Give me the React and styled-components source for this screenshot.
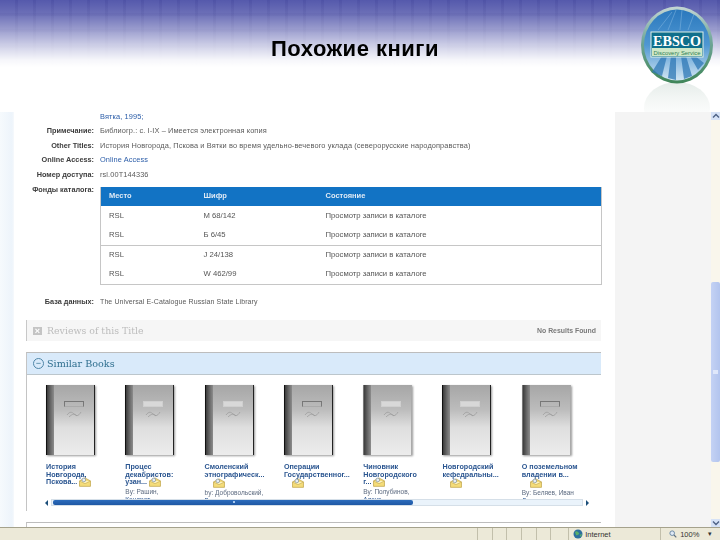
import React from 'react';
import styled, { createGlobalStyle } from 'styled-components';

const notes = [
  { label: 'Примечание:', value: 'Библиогр.: с. I-IX – Имеется электронная копия' },
  { label: 'Other Titles:', value: 'История Новгорода, Пскова и Вятки во время удельно-вечевого уклада (северорусские народоправства)' },
  { label: 'Online Access:', value: 'Online Access', link: true },
  { label: 'Номер доступа:', value: 'rsl.00T144336' },
];

const holdings = [
  { place: 'RSL', code: 'М 68/142' },
  { place: 'RSL', code: 'Б 6/45', divider: true },
  { place: 'RSL', code: 'J 24/138' },
  { place: 'RSL', code: 'W 462/99' },
];

const books = [
  { title: 'История\nНовгорода,\nПскова...', filled: false },
  { title: 'Процес\nдекабристов:\nузан...', by: 'By: Рашин,', author: 'Кондрат...', filled: true },
  { title: 'Смоленский\nэтнографическ...', by: 'by: Добровольский,', author: 'В...', filled: true, wrapIcon: true },
  { title: 'Операции\nГосударственног...', filled: false, wrapIcon: true },
  { title: 'Чиновник\nНовгородского\nг...', by: 'By: Полубинов,', author: 'Алекс...', filled: true, soft: true },
  { title: 'Новгородский\nкефедральны...', filled: true, wrapIcon: true },
  { title: 'О поземельном\nвладении в...', by: 'By: Беляев, Иван', author: 'Дм...', filled: false, soft: true, wrapIcon: true },
];

const App = () => {
  return (
    <Slide>
      <GlobalStyle />
      <Header>
        <Title>Похожие книги</Title>
        <Logo />
      </Header>
      <Body>
        <LeftStrip />
        <Main>
          <Details>
            <Label />
            <Value $link>Вятка, 1995;</Value>
            {notes.map((n) => (
              <React.Fragment key={n.label}>
                <Label>{n.label}</Label>
                <Value $link={n.link}>{n.value}</Value>
              </React.Fragment>
            ))}
            <Label $top>Фонды каталога:</Label>
            <HoldingsTable>
              <thead>
                <tr>
                  <HeadCell>Место</HeadCell>
                  <HeadCell>Шифр</HeadCell>
                  <HeadCell>Состояние</HeadCell>
                </tr>
              </thead>
              <tbody>
                {holdings.map((h) => (
                  <HoldingRow key={h.code} $divider={h.divider}>
                    <td>{h.place}</td>
                    <td>{h.code}</td>
                    <td>Просмотр записи в каталоге</td>
                  </HoldingRow>
                ))}
              </tbody>
            </HoldingsTable>
            <Label $db>База данных:</Label>
            <Value $db>The Universal E-Catalogue Russian State Library</Value>
          </Details>

          <ReviewsBar>
            <ClosedBox>×</ClosedBox>
            <PanelTitle $muted>Reviews of this Title</PanelTitle>
            <NoResults>No Results Found</NoResults>
          </ReviewsBar>

          <SimilarPanel>
            <SimilarHead>
              <Toggle>−</Toggle>
              <PanelTitle>Similar Books</PanelTitle>
            </SimilarHead>
            <BookRow>
              {books.map((b) => (
                <BookCell key={b.title}>
                  <BookCover $soft={b.soft}>
                    <Spine />
                    <BookLabel $filled={b.filled} />
                    <Squiggle />
                  </BookCover>
                  <BookTitle>
                    {b.title} {!b.wrapIcon && <MailIcon />}
                  </BookTitle>
                  {b.wrapIcon && (
                    <IconLine>
                      <MailIcon />
                    </IconLine>
                  )}
                  {b.by && (
                    <ByLine>
                      {b.by}
                      <br />
                      <AuthorLink>{b.author}</AuthorLink>
                    </ByLine>
                  )}
                </BookCell>
              ))}
            </BookRow>
            <HScroll>
              <ArrowLeft />
              <HTrack>
                <HThumb />
              </HTrack>
              <ArrowRight />
            </HScroll>
          </SimilarPanel>
          <NextPanel />
        </Main>
        <Gutter />
        <VScroll>
          <VButton>
            <UpChevron />
          </VButton>
          <VThumb />
          <VButton $bottom>
            <DownChevron />
          </VButton>
        </VScroll>
      </Body>
      <StatusBar>
        <StatusCell />
        <StatusCell />
        <StatusCell />
        <StatusCell />
        <StatusCell />
        <StatusCell />
        <InternetCell>
          <Globe />
          Internet
        </InternetCell>
        <ZoomCell>
          <Magnifier />
          100%
        </ZoomCell>
        <ZoomArrow>▾</ZoomArrow>
      </StatusBar>
    </Slide>
  );
};

const Logo = () => (
  <LogoSvg viewBox="0 0 80 112" width="80" height="112">
    <defs>
      <linearGradient id="sky" x1="0" y1="0" x2="0" y2="1">
        <stop offset="0" stopColor="#2a78bd" />
        <stop offset="0.5" stopColor="#4f97d2" />
        <stop offset="1" stopColor="#d3e6f3" />
      </linearGradient>
      <linearGradient id="rim" x1="0" y1="0" x2="0" y2="1">
        <stop offset="0" stopColor="#c4d6d4" />
        <stop offset="0.45" stopColor="#6fa698" />
        <stop offset="1" stopColor="#3f8558" />
      </linearGradient>
      <linearGradient id="mirror" x1="0" y1="0" x2="0" y2="1">
        <stop offset="0" stopColor="#cfdcd6" stopOpacity="0.55" />
        <stop offset="1" stopColor="#ffffff" stopOpacity="0" />
      </linearGradient>
    </defs>
    <ellipse cx="39" cy="108" rx="33" ry="26" fill="url(#mirror)" />
    <ellipse cx="39" cy="45" rx="36" ry="38.5" fill="url(#rim)" />
    <ellipse cx="39" cy="45" rx="33" ry="35.5" fill="url(#sky)" />
    <path d="M14 72 L24 56 H29 L24 76 Z M30 78 L33 56 H38 L38 80 Z M46 79 L43 56 H48 L54 76 Z M60 70 L52 56 H57 L66 63 Z" fill="#2f78b5" opacity="0.75" />
    <path d="M20 30 L34 12 M30 30 L38 10 M42 30 L44 10 M50 30 L56 14" stroke="#7fb4de" strokeWidth="1" opacity="0.55" />
    <rect x="13" y="32" width="52" height="25" fill="#0f6f8c" stroke="#dff0e6" strokeWidth="1" />
    <text x="39" y="46" textAnchor="middle" fontFamily="'Liberation Serif', serif" fontWeight="700" fontSize="14.5" fill="#ffffff" textLength="48" lengthAdjust="spacingAndGlyphs">EBSCO</text>
    <rect x="14" y="48" width="50" height="8" fill="#cfe8c8" />
    <text x="39" y="54.5" textAnchor="middle" fontFamily="'Liberation Sans', sans-serif" fontSize="6" fill="#2f7f55" textLength="47" lengthAdjust="spacingAndGlyphs">Discovery Service</text>
  </LogoSvg>
);

const Squiggle = () => (
  <SquiggleSvg viewBox="0 0 16 8" width="16" height="8">
    <path d="M1 5 C4 1 6 2 8 4 S12 7 15 2 M3 7 C6 4 9 3 11 6" fill="none" stroke="#9a9a9a" strokeWidth="0.7" />
  </SquiggleSvg>
);

const MailIcon = () => (
  <MailSvg viewBox="0 0 11 9" width="12" height="10">
    <path d="M0.5 3.5 L5.5 0.8 L10.5 3.5 V8.5 H0.5 Z" fill="#f4dc7a" stroke="#b89a36" strokeWidth="0.6" />
    <path d="M0.5 3.5 L5.5 6 L10.5 3.5" fill="#fff6c4" stroke="#b89a36" strokeWidth="0.5" />
    <circle cx="4.4" cy="2.6" r="1.7" fill="#e8eef4" stroke="#7a8a98" strokeWidth="0.6" />
  </MailSvg>
);

const Globe = () => (
  <svg viewBox="0 0 10 10" width="10" height="10">
    <circle cx="5" cy="5" r="4.5" fill="#2c6f9f" />
    <path d="M2 3 C4 1 5 3 6 4 S4 7 3 6 Z M6.5 6 L9 5 L8 8 Z" fill="#58b06a" />
  </svg>
);

const Magnifier = () => (
  <svg viewBox="0 0 9 9" width="8" height="8">
    <circle cx="3.6" cy="3.6" r="2.6" fill="#dfe9f5" stroke="#5f7f9f" strokeWidth="1" />
    <path d="M5.6 5.6 L8.2 8.2" stroke="#5f6f7f" strokeWidth="1.3" />
  </svg>
);

const UpChevron = () => (
  <svg viewBox="0 0 8 6" width="8" height="6">
    <path d="M1 4.5 L4 1.5 L7 4.5" fill="none" stroke="#4d6185" strokeWidth="1.4" />
  </svg>
);

const DownChevron = () => (
  <svg viewBox="0 0 8 6" width="8" height="6">
    <path d="M1 1.5 L4 4.5 L7 1.5" fill="none" stroke="#4d6185" strokeWidth="1.4" />
  </svg>
);

const GlobalStyle = createGlobalStyle`
  html, body {
    margin: 0;
    padding: 0;
    background: #fff;
    overflow: hidden;
  }
  * {
    box-sizing: border-box;
  }
`;

const Slide = styled.div`
  width: 720px;
  height: 540px;
  display: flex;
  flex-direction: column;
  overflow: hidden;
  font-family: 'Liberation Sans', Arial, sans-serif;
  background: #fff;
`;

const Header = styled.header`
  position: relative;
  flex: 0 0 112px;
  display: flex;
  justify-content: center;
  padding: 36px 10px 0 0;
  background:
    linear-gradient(180deg, rgba(255, 255, 255, 0) 0, rgba(255, 255, 255, 0.14) 14px, rgba(255, 255, 255, 0.42) 30px, rgba(255, 255, 255, 0.72) 46px, rgba(255, 255, 255, 0.95) 60px, #fff 67px),
    repeating-linear-gradient(90deg, rgba(40, 40, 130, 0) 0 15px, rgba(40, 40, 130, 0.14) 15px 18px),
    repeating-linear-gradient(180deg, rgba(40, 40, 130, 0) 0 13px, rgba(40, 40, 130, 0.1) 13px 16px),
    #5559ac;
`;

const Title = styled.h1`
  margin: 0;
  font-size: 22px;
  line-height: 26px;
  font-weight: 700;
  letter-spacing: 0.5px;
  color: #000;
  filter: blur(0.3px);
`;

const LogoSvg = styled.svg`
  position: absolute;
  right: 2px;
  top: 0;
`;

const Body = styled.div`
  flex: 1;
  min-height: 0;
  display: flex;
`;

const LeftStrip = styled.aside`
  flex: 0 0 14px;
  background: linear-gradient(90deg, #f6fafd, #edf4fb 85%, #f6f9fc);
`;

const Main = styled.main`
  flex: 0 0 601px;
  overflow: hidden;
  background: #fff;
  filter: blur(0.45px);
`;

const Details = styled.div`
  display: grid;
  grid-template-columns: 80px 502px;
  column-gap: 6px;
  grid-auto-rows: 14.4px;
  margin-top: -2px;
  font-size: 7.4px;
  line-height: 14.4px;
`;

const Label = styled.div`
  text-align: right;
  font-weight: 700;
  font-size: 7.3px;
  color: #3c3c3c;
  ${(p) => p.$top && 'grid-row: span 7; margin-top: 1px;'}
  ${(p) => p.$db && 'margin-top: 12px;'}
`;

const Value = styled.div`
  color: ${(p) => (p.$link ? '#2a5ca8' : '#5a5a5a')};
  letter-spacing: 0.1px;
  white-space: nowrap;
  ${(p) => p.$db && 'margin-top: 12px; font-size: 7px;'}
`;

const HoldingsTable = styled.table`
  grid-row: span 7;
  width: 502px;
  height: 98px;
  margin-top: 5px;
  border-collapse: collapse;
  table-layout: fixed;
  font-size: 7.7px;
  color: #555;
  border: 1px solid #c6c6c6;
  border-top: none;

  td {
    padding: 0 0 0 8px;
  }
  td:nth-child(1),
  th:nth-child(1) {
    width: 95px;
  }
  td:nth-child(2),
  th:nth-child(2) {
    width: 122px;
  }
`;

const HeadCell = styled.th`
  height: 19px;
  padding: 0 0 0 8px;
  background: #1273c4;
  color: #dfeaf5;
  font-size: 7.5px;
  font-weight: 700;
  text-align: left;
`;

const HoldingRow = styled.tr`
  height: 19.7px;
  border-bottom: ${(p) => (p.$divider ? '1px solid #c6c6c6' : 'none')};
`;

const ReviewsBar = styled.section`
  display: flex;
  align-items: center;
  gap: 5px;
  width: 574px;
  height: 21px;
  margin: 23px 0 0 13px;
  padding: 0 5px 0 6px;
  background: #f6f6f6;
  box-shadow: -1px 0 0 #c8c8c8;
`;

const ClosedBox = styled.span`
  width: 9px;
  height: 8px;
  background: #c4c4c4;
  color: #fff;
  font-size: 9px;
  line-height: 8px;
  font-weight: 700;
  text-align: center;
`;

const PanelTitle = styled.span`
  font-family: 'DejaVu Serif', 'Liberation Serif', serif;
  font-size: ${(p) => (p.$muted ? '9.4px' : '9.6px')};
  color: ${(p) => (p.$muted ? '#bcbcbc' : '#2f6f8f')};
`;

const NoResults = styled.span`
  margin-left: auto;
  font-size: 6.9px;
  font-weight: 700;
  color: #7a7a7a;
`;

const SimilarPanel = styled.section`
  position: relative;
  width: 575px;
  height: 159px;
  margin: 11px 0 0 12px;
  border-top: 1px solid #bdbdbd;
  border-left: 1px solid #c4c4c4;
  overflow: hidden;
`;

const SimilarHead = styled.div`
  display: flex;
  align-items: center;
  gap: 3px;
  height: 22px;
  padding-left: 6px;
  background: #d9eafa;
  border-bottom: 1px solid #bcc6cc;
`;

const Toggle = styled.span`
  width: 11px;
  height: 11px;
  border: 1px solid #4f86a8;
  border-radius: 50%;
  color: #2f6f8f;
  font-size: 9px;
  line-height: 8px;
  text-align: center;
`;

const BookRow = styled.div`
  display: grid;
  grid-template-columns: repeat(7, 79.3px);
  padding: 10px 0 0 19px;
`;

const BookCell = styled.article`
  width: 72px;
`;

const BookCover = styled.div`
  position: relative;
  width: 49px;
  height: 70px;
  margin-bottom: 8px;
  background: linear-gradient(180deg, #a6a6a6 0, #bcbcbc 35%, #dedede 60%, #ececec 100%);
  border-left: 1px solid ${(p) => (p.$soft ? '#777' : '#111')};
  border-right: 1px solid ${(p) => (p.$soft ? '#aaa' : '#222')};
  box-shadow: 1px 1px 2px #999;
`;

const Spine = styled.span`
  position: absolute;
  left: 0;
  top: 0;
  bottom: 0;
  width: 7px;
  background: linear-gradient(90deg, #3c3c3c, #6a6a6a 55%, #8c8c8c);
`;

const BookLabel = styled.span`
  position: absolute;
  left: 17px;
  top: 16px;
  width: 20px;
  height: 6px;
  background: ${(p) => (p.$filled ? '#d8d8d8' : 'transparent')};
  border: 1px solid ${(p) => (p.$filled ? '#cfcfcf' : '#777')};
  border-bottom-color: ${(p) => (p.$filled ? '#cfcfcf' : '#aaa')};
`;

const SquiggleSvg = styled.svg`
  position: absolute;
  left: 19px;
  top: 25px;
`;

const BookTitle = styled.div`
  white-space: pre-line;
  font-size: 7.2px;
  line-height: 7.7px;
  font-weight: 700;
  color: #2a5590;
`;

const IconLine = styled.div`
  height: 9px;
  padding-left: 8px;
  line-height: 9px;
`;

const MailSvg = styled.svg`
  display: inline-block;
  margin: -4px 0 -2px;
  vertical-align: middle;
`;

const ByLine = styled.div`
  margin-top: 2px;
  font-size: 6.5px;
  line-height: 7.5px;
  white-space: nowrap;
  color: #5d6b80;
`;

const AuthorLink = styled.span`
  color: #2a5590;
  text-decoration: underline;
`;

const HScroll = styled.div`
  position: absolute;
  left: 18px;
  right: 12px;
  top: 146px;
  display: flex;
  align-items: center;
  gap: 3px;
`;

const ArrowLeft = styled.span`
  border: 3px solid transparent;
  border-right: 3px solid #1c4f7a;
  border-left: none;
`;

const ArrowRight = styled.span`
  border: 3px solid transparent;
  border-left: 3px solid #1c4f7a;
  border-right: none;
`;

const HTrack = styled.div`
  flex: 1;
  height: 7px;
  padding: 0 1px;
  background: #eaf3fb;
  border: 1px solid #d5dfe8;
`;

const HThumb = styled.div`
  position: relative;
  width: 360px;
  height: 100%;
  border-radius: 2px;
  background: linear-gradient(180deg, #2c6cbc, #1e57a4);

  &::after {
    content: '';
    position: absolute;
    left: 50%;
    top: 1px;
    width: 2px;
    height: 2px;
    background: #a8c8ee;
  }
`;

const NextPanel = styled.div`
  width: 575px;
  height: 20px;
  margin: 11px 0 0 12px;
  border-top: 1px solid #bdbdbd;
  border-left: 1px solid #c4c4c4;
`;

const Gutter = styled.aside`
  flex: 0 0 96px;
  background: #f4f4f4;
`;

const VScroll = styled.div`
  flex: 0 0 9px;
  display: flex;
  flex-direction: column;
  padding-top: 170px;
  position: relative;
  background: #f9f6ec;
`;

const VButton = styled.div`
  position: absolute;
  left: 0;
  width: 9px;
  height: 8px;
  display: flex;
  align-items: center;
  justify-content: center;
  background: #d6e2f6;
  ${(p) => (p.$bottom ? 'bottom: 0;' : 'top: 0;')}
`;

const VThumb = styled.div`
  position: relative;
  height: 180px;
  background: linear-gradient(90deg, #c4d2f4, #b2c4ee);
  border-radius: 2px;

  &::after {
    content: '';
    position: absolute;
    left: 2px;
    top: 88px;
    width: 5px;
    height: 4px;
    background: #dfe7fa;
  }
`;

const StatusBar = styled.footer`
  flex: 0 0 13px;
  display: flex;
  align-items: center;
  padding-left: 477px;
  background: #ece9d8;
  border-top: 1px solid #a5a28c;
  font-size: 7.5px;
  color: #333;
`;

const StatusCell = styled.div`
  width: 14.7px;
  height: 100%;
  border-left: 1px solid #c2bfab;
`;

const InternetCell = styled.div`
  display: flex;
  align-items: center;
  gap: 2px;
  width: 92px;
  height: 100%;
  padding: 0 0 0 4px;
  margin-left: 3px;
  border-left: 1px solid #c2bfab;
`;

const ZoomCell = styled.div`
  display: flex;
  align-items: center;
  gap: 3px;
  width: 48px;
  height: 100%;
  padding-left: 8px;
  white-space: nowrap;
  border-left: 1px solid #c2bfab;
`;

const ZoomArrow = styled.span`
  font-size: 7px;
`;

export default App;
